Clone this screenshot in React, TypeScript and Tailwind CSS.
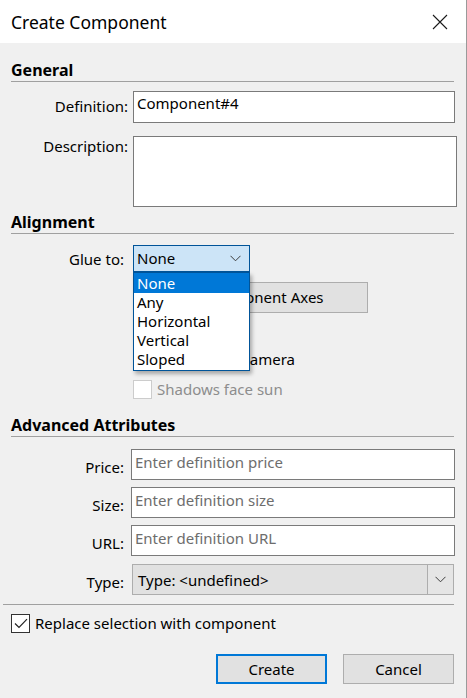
import React from "react";

const Chevron = ({ className = "" }: { className?: string }) => (
  <svg width="11" height="7" viewBox="0 0 11 7" className={className}>
    <polyline points="0.5,0.8 5.5,5.8 10.5,0.8" fill="none" stroke="#3c3c3c" strokeWidth="1" />
  </svg>
);

const Heading = ({ children, h }: { children: React.ReactNode; h: string }) => (
  <div className={`${h} flex items-end border-b border-[#a0a0a0] mx-[11px] w-[443px] pb-[1px]`}>
    <span className="font-bold text-[16px] leading-[20px] text-black">{children}</span>
  </div>
);

export default function App() {
  return (
    <div
      className="relative w-[467px] h-[698px] bg-[#f0f0f0] border-r border-[#9a9a9a] overflow-hidden text-black"
      style={{ fontFamily: '"Noto Sans", "Open Sans", sans-serif' }}
    >
      {/* title bar */}
      <div className="h-[43px] bg-white flex items-center justify-between pl-[11px] pr-[18px]">
        <span className="text-[17.5px] leading-none mt-[2px]">Create Component</span>
        <svg width="16" height="16" viewBox="0 0 16 16">
          <path d="M1 1 L15 15 M15 1 L1 15" stroke="#1a1a1a" strokeWidth="1.1" />
        </svg>
      </div>

      {/* General */}
      <Heading h="h-[39px]">General</Heading>

      <div className="flex items-start mt-[9px]">
        <div className="w-[128px] text-right text-[15px] leading-[20px] pt-[5px]">Definition:</div>
        <div className="ml-[5px] w-[322px] h-[32px] bg-white border border-[#7a7a7a] px-[3px] text-[15px] leading-[20px] pt-[1px]">
          Component#4
        </div>
      </div>

      <div className="flex items-start mt-[13px]">
        <div className="w-[128px] text-right text-[15px] leading-[20px] pt-[0px]">Description:</div>
        <div className="ml-[5px] w-[324px] h-[71px] bg-white border border-[#7a7a7a]" />
      </div>

      {/* Alignment */}
      <Heading h="h-[27px]">Alignment</Heading>

      <div className="relative pt-[11px]">
        <div className="flex items-center h-[27px]">
          <div className="w-[124px] text-right text-[15px] leading-[20px]">Glue to:</div>
          <div className="ml-[9px] w-[117px] h-[27px] bg-[#cce4f7] border border-[#005499] flex items-center justify-between pl-[3px] pr-[8px] text-[15px]">
            <span>None</span>
            <Chevron />
          </div>
        </div>

        <div className="ml-[133px] mt-[10px] w-[235px] h-[31px] bg-[#e1e1e1] border border-[#adadad] flex items-center justify-center text-[15px]">
          Set Component Axes
        </div>

        <div className="ml-[133px] mt-[8px] flex items-center h-[20px] gap-[5px]">
          <div className="w-[19px] h-[19px] bg-white border border-[#333]" />
        </div>
        <div className="ml-[133px] mt-[8px] flex items-center h-[20px] gap-[5px]">
          <div className="w-[19px] h-[19px] bg-white border border-[#333]" />
          <span className="text-[15px]">Always face camera</span>
        </div>
        <div className="ml-[133px] mt-[10px] flex items-center h-[20px] gap-[5px]">
          <div className="w-[19px] h-[19px] bg-white border border-[#cccccc]" />
          <span className="text-[15px] text-[#8d8d8d]">Shadows face sun</span>
        </div>

        {/* open dropdown list */}
        <div className="absolute left-[133px] top-[38px] w-[117px] bg-white border border-[#005499] shadow-[2px_3px_4px_rgba(0,0,0,0.3)] text-[15px] leading-[19px]">
          <div className="bg-[#0078d7] text-white px-[3px] h-[20px] flex items-center">None</div>
          <div className="px-[3px]">Any</div>
          <div className="px-[3px]">Horizontal</div>
          <div className="px-[3px]">Vertical</div>
          <div className="px-[3px] pb-[1px]">Sloped</div>
        </div>
      </div>

      {/* Advanced */}
      <Heading h="h-[38px]">Advanced Attributes</Heading>

      <div className="flex flex-col gap-[7px] mt-[12px]">
        {[
          ["Price:", "Enter definition price"],
          ["Size:", "Enter definition size"],
          ["URL:", "Enter definition URL"],
        ].map(([l, p]) => (
          <div key={l} className="flex items-center h-[31px]">
            <div className="w-[124px] text-right text-[15px] leading-[20px] pt-[4px]">{l}</div>
            <div className="ml-[7px] w-[324px] h-[31px] bg-white border border-[#7a7a7a] px-[3px] text-[15px] leading-[20px] text-[#6d6d6d] pt-[2px]">
              {p}
            </div>
          </div>
        ))}
        <div className="flex items-center h-[31px] mt-[1px]">
          <div className="w-[124px] text-right text-[15px] leading-[20px] pt-[4px]">Type:</div>
          <div className="ml-[8px] w-[322px] h-[31px] bg-[#e1e1e1] border border-[#adadad] flex items-stretch">
            <div className="flex-1 flex items-center px-[5px] text-[15px] pt-[2px]">Type: &lt;undefined&gt;</div>
            <div className="w-[26px] border-l border-[#adadad] flex items-center justify-center bg-[#e5e5e5]">
              <Chevron />
            </div>
          </div>
        </div>
      </div>

      <div className="mt-[9px] ml-[3px] w-[451px] border-b border-[#a0a0a0]" />

      <div className="ml-[11px] mt-[8px] flex items-center gap-[5px] h-[20px]">
        <div className="w-[19px] h-[19px] bg-white border border-[#333] flex items-center justify-center">
          <svg width="14" height="11" viewBox="0 0 14 11">
            <polyline points="1,5.5 5,9.5 13,1.2" fill="none" stroke="#222" strokeWidth="1.2" />
          </svg>
        </div>
        <span className="text-[15px]">Replace selection with component</span>
      </div>

      <div className="flex justify-end gap-[16px] mt-[21px] pr-[12px]">
        <div className="w-[111px] h-[30px] bg-[#e1e1e1] border-2 border-[#0078d7] flex items-center justify-center text-[15px]">
          Create
        </div>
        <div className="w-[111px] h-[30px] bg-[#e1e1e1] border border-[#adadad] flex items-center justify-center text-[15px]">
          Cancel
        </div>
      </div>
    </div>
  );
}
